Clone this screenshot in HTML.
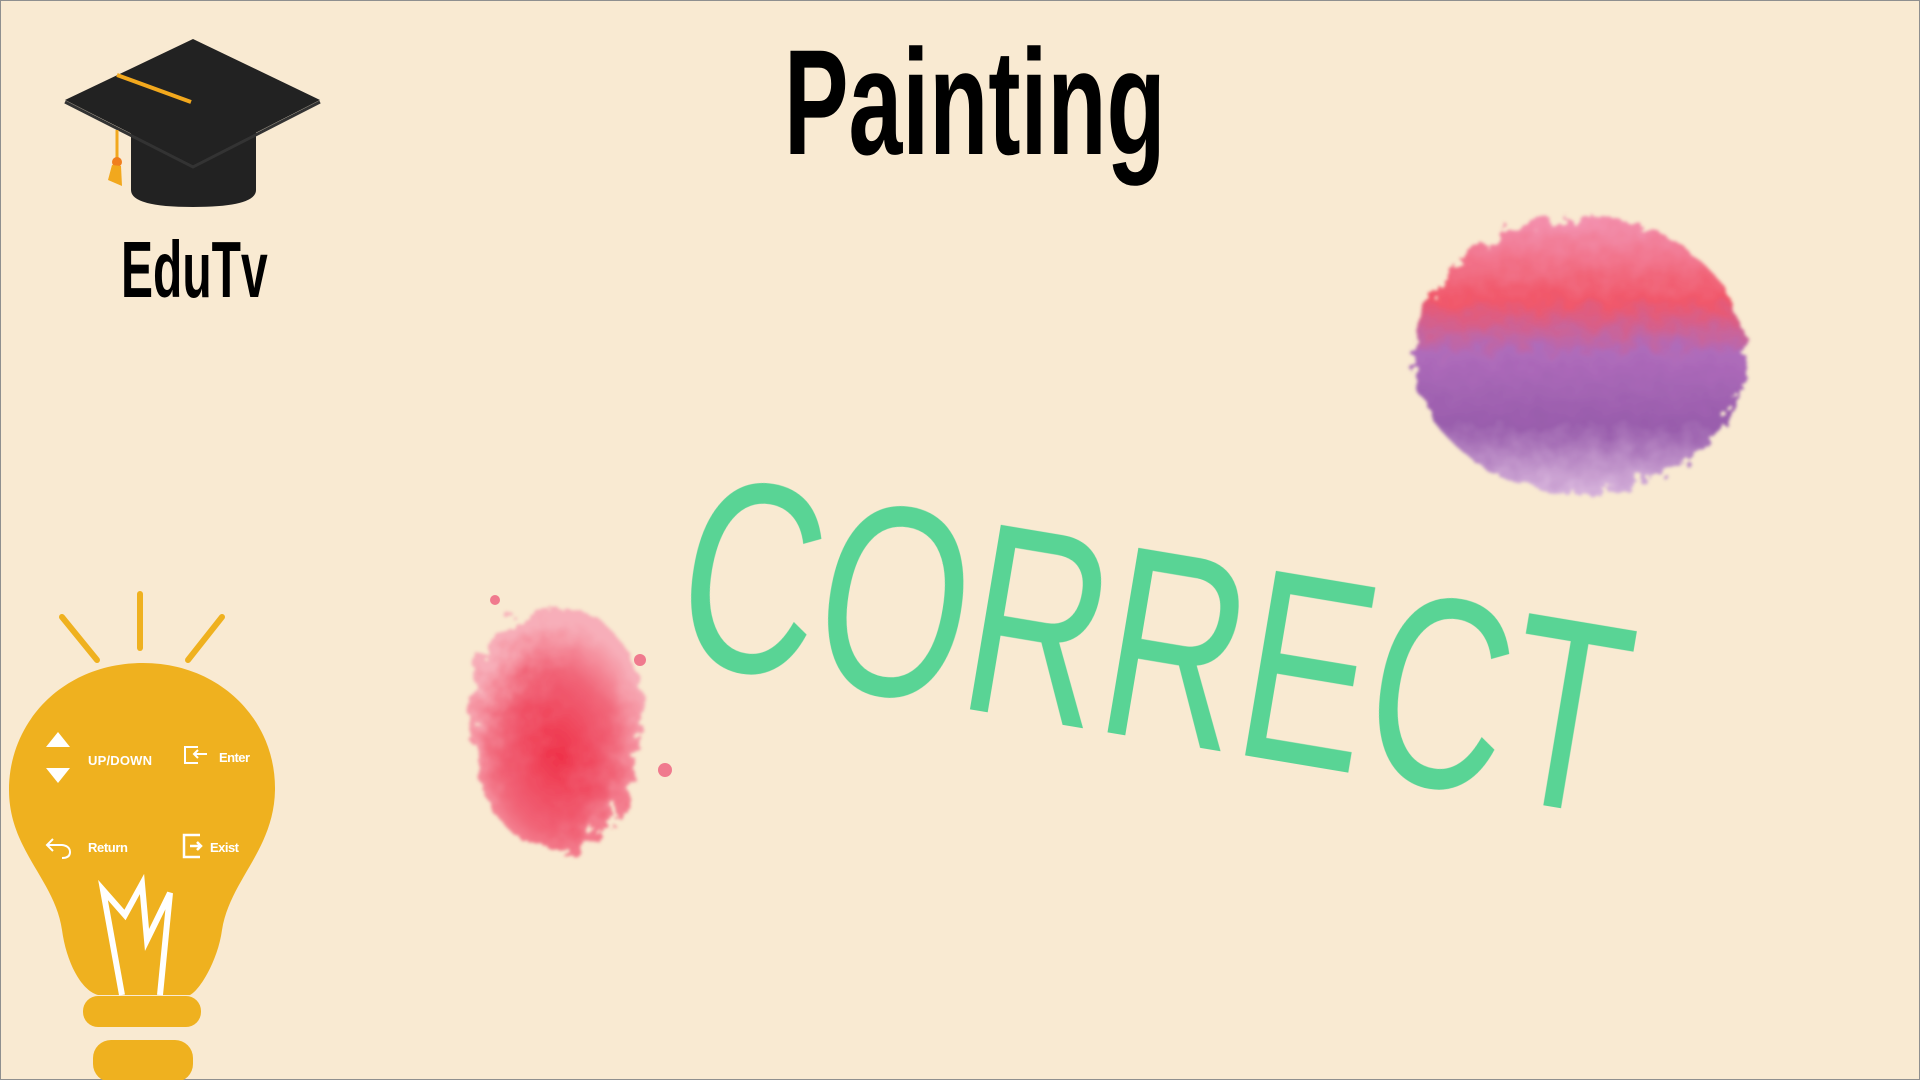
<!DOCTYPE html>
<html><head><meta charset="utf-8"><style>
html,body{margin:0;padding:0}
body{width:1920px;height:1080px;background:#F9EAD2;position:relative;overflow:hidden;font-family:"Liberation Sans",sans-serif}
.frame{position:absolute;left:0;top:0;width:1918px;height:1078px;border:1px solid #8f8f8f}
.t{position:absolute;font-weight:bold;color:#000;white-space:nowrap;transform-origin:0 0;line-height:1}
</style></head><body>
<div class="frame"></div>
<svg width="1920" height="1080" style="position:absolute;left:0;top:0">
<defs>
<filter id="rough" x="-30%" y="-30%" width="160%" height="160%">
<feTurbulence type="fractalNoise" baseFrequency="0.06" numOctaves="3" seed="4"/>
<feDisplacementMap in="SourceGraphic" scale="30"/>
<feGaussianBlur stdDeviation="1.5"/>
</filter>
<radialGradient id="rg" cx="0.5" cy="0.6" r="0.55"><stop offset="0" stop-color="#EE1E3A"/><stop offset="0.6" stop-color="#F0566E"/><stop offset="1" stop-color="#F7A8B6"/></radialGradient>
<linearGradient id="pg" x1="0" y1="0" x2="0" y2="1"><stop offset="0" stop-color="#F28AAE"/><stop offset="0.3" stop-color="#F0485E"/><stop offset="0.5" stop-color="#A65DB8"/><stop offset="0.75" stop-color="#8E4EA8"/><stop offset="1" stop-color="#D5B0DE"/></linearGradient>
</defs>
<!-- cap -->
<path d="M131 118 L131 190 Q131 207 193 207 Q256 207 256 190 L256 118 Z" fill="#222"/>
<path d="M65 100 L193 39 L320 100 L193 165 Z" fill="#222"/>
<path d="M65 102 L193 167 L320 102" fill="none" stroke="#333" stroke-width="3"/>
<line x1="117" y1="75" x2="191" y2="102" stroke="#F2A81D" stroke-width="4"/>
<line x1="117" y1="130" x2="117" y2="165" stroke="#F2A81D" stroke-width="3"/>
<circle cx="117" cy="162" r="5" fill="#F07E1E"/>
<path d="M112 165 L108 180 L122 186 L121 166 Z" fill="#F2A81D"/>
<!-- splashes -->
<g filter="url(#rough)">
<ellipse cx="1580" cy="355" rx="165" ry="138" fill="url(#pg)" opacity="0.9"/>
<path d="M490 640 Q540 590 600 620 Q650 660 640 740 Q630 830 570 850 Q500 850 480 780 Q460 700 490 640Z" fill="url(#rg)" opacity="0.9"/>
</g>
<circle cx="665" cy="770" r="7" fill="#F07A8E"/><circle cx="640" cy="660" r="6" fill="#F07A8E"/><circle cx="495" cy="600" r="5" fill="#F07A8E"/>
<!-- bulb -->
<g stroke="#EFB11F" stroke-width="6" stroke-linecap="round">
<line x1="140" y1="594" x2="140" y2="648"/><line x1="62" y1="617" x2="97" y2="660"/><line x1="222" y1="617" x2="188" y2="660"/>
</g>
<path d="M143 663 C 220 663 276 720 275 790 C 274 850 230 880 222 930 C 218 960 200 990 190 995 L98 995 C 80 990 66 960 62 930 C 55 880 9 850 9 790 C 9 720 65 663 143 663 Z" fill="#EFB11F"/>
<rect x="83" y="996" width="118" height="31" rx="15" fill="#EFB11F"/>
<rect x="93" y="1040" width="100" height="42" rx="18" fill="#EFB11F"/>
<path d="M122 995 L103 890 L125 915 L142 884 L147 940 L170 893 L160 995" fill="none" stroke="#fff" stroke-width="6" stroke-linejoin="miter"/>
<polygon points="58,732 46,747 70,747" fill="#fff"/><polygon points="46,768 70,768 58,783" fill="#fff"/>
<path d="M198 747 L185 747 L185 763 L198 763 M207 754 L194 754 M198 750 L194 754 L198 758" fill="none" stroke="#fff" stroke-width="2"/>
<path d="M53 839 L47 845 L53 851 M47 845 L62 845 Q70 846 70 852 Q70 858 62 858" fill="none" stroke="#fff" stroke-width="2"/>
<path d="M200 835 L184 835 L184 857 L200 857" fill="none" stroke="#fff" stroke-width="2.5"/>
<path d="M190 846 L200 846 M197 842 L201 846 L197 850" fill="none" stroke="#fff" stroke-width="2.5"/>
<g fill="#fff" font-family="Liberation Sans,sans-serif" font-weight="bold" font-size="13">
<text x="88" y="765" textLength="64">UP/DOWN</text>
<text x="219" y="762" textLength="31">Enter</text>
<text x="88" y="852" textLength="40">Return</text>
<text x="210" y="852" textLength="29">Exist</text>
</g>
</svg>
<div class="t" style="left:784px;top:27px;font-size:150px;transform:scaleX(0.645)">Painting</div>
<div class="t" style="left:121px;top:230px;font-size:80px;transform:scaleX(0.6)">EduTv</div>
<div style="position:absolute;left:1155px;top:645px;width:0;height:0">
<div style="position:absolute;left:0;top:0;transform:translate(-50%,-50%) rotate(9.5deg) scaleX(0.71);font-size:272px;color:#59D495;white-space:nowrap;line-height:1">CORRECT</div>
</div>
</body></html>
